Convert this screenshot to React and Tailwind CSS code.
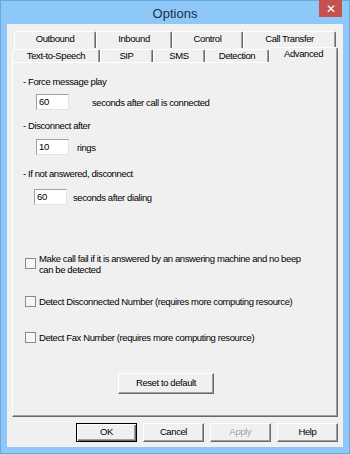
import React from 'react';

const tabBase =
    'flex items-center justify-center bg-[#f0f0f0] border-t border-l border-r border-t-white border-l-white border-r-[#696969] shadow-[inset_-1px_0_0_#a0a0a0] rounded-t-[2px]';

const row1 = [
    { label: 'Outbound', w: 'w-[82px]' },
    { label: 'Inbound', w: 'w-[76px]' },
    { label: 'Control', w: 'w-[71px]' },
    { label: 'Call Transfer', w: 'w-[93px]' },
];

const row2 = [
    { label: 'Text-to-Speech', w: 'w-[88px]' },
    { label: 'SIP', w: 'w-[53px]' },
    { label: 'SMS', w: 'w-[52px]' },
    { label: 'Detection', w: 'w-[64px]' },
];

function Btn({ children, className = '', def = false, disabled = false }) {
    return (
        <div
            className={`flex items-center justify-center bg-[#f0f0f0] border ${
                def
                    ? 'border-[#000] shadow-[inset_1px_1px_0_#fff,inset_-1px_-1px_0_#696969,inset_-2px_-2px_0_#a0a0a0]'
                    : 'border-t-white border-l-white border-b-[#696969] border-r-[#696969] shadow-[inset_-1px_-1px_0_#a0a0a0]'
            } ${disabled ? 'text-[#a0a0a0] [text-shadow:1px_1px_0_#fff]' : 'text-black'} ${className}`}
        >
            {children}
        </div>
    );
}

function NumBox({ value, className = '' }) {
    return (
        <div
            className={`w-[33px] h-[16px] bg-white border border-t-[#a0a0a0] border-l-[#a0a0a0] border-b-[#e3e3e3] border-r-[#e3e3e3] pl-[2px] leading-[14px] ${className}`}
        >
            {value}
        </div>
    );
}

function Check({ children, className = '' }) {
    return (
        <div className={`flex items-center ${className}`}>
            <div className="w-[11px] h-[11px] shrink-0 bg-[#f6f6f6] border border-[#8a8a8a]" />
            <div className="ml-[3px] leading-[11px] whitespace-nowrap">{children}</div>
        </div>
    );
}

export default function App() {
    return (
        <div className="w-[350px] h-[454px] flex flex-col bg-[#8ec8f8] border border-[#6aa8de] font-['Liberation_Sans',Arial,sans-serif] text-[9.5px] tracking-[-0.4px] text-black">
            {/* title bar */}
            <div className="h-[23px] grid grid-cols-[1fr_auto_1fr] px-[7px]">
                <div />
                <div className="self-center text-[13px] tracking-normal text-[#1c2e44] pt-[2px]">Options</div>
                <div className="justify-self-end">
                    <div className="w-[23px] h-[17px] -mt-[1px] bg-[#c75050] flex items-center justify-center text-white text-[12px] leading-none tracking-normal">
                        ✕
                    </div>
                </div>
            </div>

            {/* client area */}
            <div className="flex-1 mx-[6px] mb-[6px] bg-[#f0f0f0] pt-[7px] px-[5px] flex flex-col">
                {/* tabs */}
                <div className="h-[16px] flex px-[2px]">
                    {row1.map((t) => (
                        <div key={t.label} className={`${tabBase} ${t.w} h-[17px] pb-[1px]`}>
                            {t.label}
                        </div>
                    ))}
                </div>
                <div className="h-[15px] flex items-end">
                    {row2.map((t) => (
                        <div key={t.label} className={`${tabBase} ${t.w} h-[13px] pt-[1px]`}>
                            {t.label}
                        </div>
                    ))}
                    <div className={`${tabBase} relative w-[69px] h-[16px] -mb-[1px] pb-[2px]`}>Advanced</div>
                </div>

                {/* panel */}
                <div className="h-[355px] flex flex-col border-t border-l border-b border-r border-t-white border-l-white border-b-[#696969] border-r-[#696969] shadow-[inset_-1px_-1px_0_#a0a0a0]">
                    <div className="mt-[13px] ml-[10px] leading-[12px]">- Force message play</div>
                    <div className="mt-[6px] ml-[23px] flex items-center">
                        <NumBox value="60" />
                        <span className="ml-[23px] pt-[2px]">seconds after call is connected</span>
                    </div>

                    <div className="mt-[10px] ml-[10px] leading-[12px]">- Disconnect after</div>
                    <div className="mt-[7px] ml-[23px] flex items-center">
                        <NumBox value="10" />
                        <span className="ml-[8px] pt-[2px]">rings</span>
                    </div>

                    <div className="mt-[12px] ml-[10px] leading-[12px]">- If not answered, disconnect</div>
                    <div className="mt-[9px] ml-[21px] flex items-center">
                        <NumBox value="60" />
                        <span className="ml-[6px] pt-[2px]">seconds after dialing</span>
                    </div>

                    <Check className="mt-[48px] ml-[12px]">
                        Make call fail if it is answered by an answering machine and no beep
                        <br />
                        can be detected
                    </Check>
                    <Check className="mt-[21px] ml-[12px]">Detect Disconnected Number (requires more computing resource)</Check>
                    <Check className="mt-[25px] ml-[12px]">Detect Fax Number (requires more computing resource)</Check>

                    <Btn className="mt-[30px] ml-[105px] w-[96px] h-[21px]">Reset to default</Btn>
                </div>

                {/* dialog buttons */}
                <div className="mt-[6px] flex justify-end gap-[6px]">
                    <Btn def className="w-[61px] h-[19px]">OK</Btn>
                    <Btn className="w-[61px] h-[19px]">Cancel</Btn>
                    <Btn disabled className="w-[61px] h-[19px]">Apply</Btn>
                    <Btn className="w-[61px] h-[19px]">Help</Btn>
                </div>
            </div>
        </div>
    );
}
